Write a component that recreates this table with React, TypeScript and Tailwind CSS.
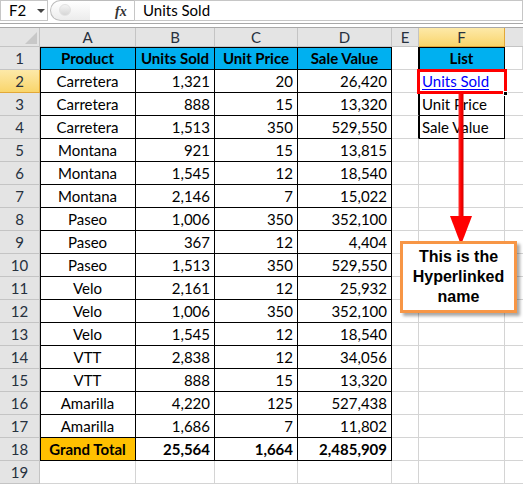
import React from "react";

const rows: [string, string, string, string][] = [
  ["Carretera", "1,321", "20", "26,420"],
  ["Carretera", "888", "15", "13,320"],
  ["Carretera", "1,513", "350", "529,550"],
  ["Montana", "921", "15", "13,815"],
  ["Montana", "1,545", "12", "18,540"],
  ["Montana", "2,146", "7", "15,022"],
  ["Paseo", "1,006", "350", "352,100"],
  ["Paseo", "367", "12", "4,404"],
  ["Paseo", "1,513", "350", "529,550"],
  ["Velo", "2,161", "12", "25,932"],
  ["Velo", "1,006", "350", "352,100"],
  ["Velo", "1,545", "12", "18,540"],
  ["VTT", "2,838", "12", "34,056"],
  ["VTT", "888", "15", "13,320"],
  ["Amarilla", "4,220", "125", "527,438"],
  ["Amarilla", "1,686", "7", "11,802"],
];

const list = ["List", "Units Sold", "Unit Price", "Sale Value"];

const grid = "grid grid-cols-[40px_96px_79px_83px_94px_27px_86px_1fr]";
const cellBase = "h-[23px] border-r border-b leading-[22px] whitespace-nowrap overflow-hidden";
const gray = "border-[#d4d4d4]";
const black = "border-black";

function RowHead({ n, active }: { n: number; active?: boolean }) {
  return (
    <div
      className={
        "h-[23px] border-r border-b text-center leading-[22px] text-[#27313e] " +
        (active
          ? "bg-gradient-to-b from-[#fde9a8] to-[#f9d56a] border-[#e2a838]"
          : "bg-[#e4e4e4] border-[#c4c4c4]")
      }
    >
      {n}
    </div>
  );
}

export default function App() {
  return (
    <div
      className="relative w-[523px] h-[484px] overflow-hidden bg-white text-black text-[15px]"
      style={{ fontFamily: "Lato, 'Open Sans', sans-serif" }}
    >
      {/* formula bar */}
      <div className="flex h-[23px] bg-white">
        <div className="w-[48px] h-[21px] border border-[#c6c6c6] flex items-center pl-[8px] relative">
          <span>F2</span>
          <span className="absolute left-[36px] top-[8px] w-0 h-0 border-l-[4px] border-r-[4px] border-t-[4px] border-l-transparent border-r-transparent border-t-[#444]" />
        </div>
        <div className="w-[86px] h-[21px] relative bg-white">
          <div className="absolute left-[2px] top-0 w-[40px] h-[21px] rounded-l-full border-l border-t border-b border-[#bcbcbc] bg-gradient-to-b from-white to-[#ececec]" />
          <div className="absolute left-[11px] top-[4px] w-[12px] h-[12px] rounded-full bg-gradient-to-b from-[#f4f4f4] to-[#d6d6d6] border border-[#e2e2e2]" />
          <div className="absolute left-[42px] top-0 w-[44px] h-[21px] border-t border-b border-[#bcbcbc]" />
          <span
            className="absolute left-[67px] top-[1px] italic font-bold text-[14px] text-[#333]"
            style={{ fontFamily: "'Liberation Serif', serif" }}
          >
            fx
          </span>
        </div>
        <div className="flex-1 h-[21px] border border-[#c6c6c6] pl-[8px] leading-[19px]">Units Sold</div>
      </div>
      <div className="h-[5px] border-t border-b border-[#a8a8a8] bg-white" />

      {/* column headers */}
      <div className={grid}>
        <div className="h-[19px] bg-[#e4e4e4] border-r border-b border-[#c4c4c4] relative">
          <span className="absolute right-[2px] bottom-[2px] w-0 h-0" style={{ borderBottom: "12px solid #c8c8c8", borderLeft: "12px solid transparent" }} />
        </div>
        {["A", "B", "C", "D", "E"].map((c) => (
          <div key={c} className="h-[19px] bg-[#e4e4e4] border-r border-b border-[#c4c4c4] text-center leading-[19px] text-[#27313e]">
            {c}
          </div>
        ))}
        <div className="h-[19px] bg-gradient-to-b from-[#fde9a8] to-[#f9d56a] border-r border-b border-[#e2a838] text-center leading-[19px] text-[#27313e]">
          F
        </div>
        <div className="h-[19px] bg-[#e4e4e4] border-b border-[#c4c4c4]" />
      </div>

      {/* sheet rows */}
      <div className={grid}>
        {/* row 1 */}
        <RowHead n={1} />
        {["Product", "Units Sold", "Unit Price", "Sale Value"].map((h, i) => (
          <div
            key={h}
            className={`${cellBase} ${black} bg-[#00b0f0] font-bold text-center ${i === 0 ? "shadow-[inset_1px_1px_0_#000]" : "shadow-[inset_0_1px_0_#000]"}`}
          >
            {h}
          </div>
        ))}
        <div className={`${cellBase} ${black} border-b-[#d4d4d4]`} />
        <div className={`${cellBase} ${black} bg-[#00b0f0] font-bold text-center shadow-[inset_1px_1px_0_#000]`}>List</div>
        <div className={`${cellBase} ${gray}`} />

        {rows.map((r, i) => {
          const n = i + 2;
          const fText = list[n - 1];
          return (
            <React.Fragment key={n}>
              <RowHead n={n} active={n === 2} />
              <div className={`${cellBase} ${black} text-center shadow-[inset_1px_0_0_#000]`}>{r[0]}</div>
              <div className={`${cellBase} ${black} text-right pr-[4px]`}>{r[1]}</div>
              <div className={`${cellBase} ${black} text-right pr-[4px]`}>{r[2]}</div>
              <div className={`${cellBase} ${black} text-right pr-[4px]`}>{r[3]}</div>
              <div className={`${cellBase} ${n <= 4 ? black : gray} border-b-[#d4d4d4]`} />
              {fText ? (
                <div className={`${cellBase} ${black} pl-[3px] shadow-[inset_1px_0_0_#000]`}>
                  {n === 2 ? <span className="text-[#0000ff] underline underline-offset-2">{fText}</span> : fText}
                </div>
              ) : (
                <div className={`${cellBase} ${gray}`} />
              )}
              <div className={`${cellBase} ${gray} border-r-0`} />
            </React.Fragment>
          );
        })}

        {/* row 18 */}
        <RowHead n={18} />
        <div className={`${cellBase} ${black} bg-[#ffc000] font-bold text-center shadow-[inset_1px_0_0_#000]`}>Grand Total</div>
        <div className={`${cellBase} ${black} font-bold text-right pr-[4px]`}>25,564</div>
        <div className={`${cellBase} ${black} font-bold text-right pr-[4px]`}>1,664</div>
        <div className={`${cellBase} ${black} font-bold text-right pr-[4px]`}>2,485,909</div>
        <div className={`${cellBase} ${gray}`} />
        <div className={`${cellBase} ${gray}`} />
        <div className={`${cellBase} ${gray} border-r-0`} />

        {/* row 19 */}
        <RowHead n={19} />
        {[0, 1, 2, 3, 4, 5].map((k) => (
          <div key={k} className={`${cellBase} ${gray}`} />
        ))}
        <div className={`${cellBase} ${gray} border-r-0`} />
      </div>

      {/* selection box around F2 */}
      <div className="absolute left-[417px] top-[69px] w-[90px] h-[25px] border-[3px] border-[#ff0000]" />
      <div className="absolute left-[503px] top-[91px] w-[5px] h-[5px] bg-black border border-white" />

      {/* red arrow */}
      <svg className="absolute left-[440px] top-[94px]" width="44" height="154" viewBox="0 0 44 154">
        <defs>
          <linearGradient id="shaft" x1="0" x2="1" y1="0" y2="0">
            <stop offset="0" stopColor="#ff3030" />
            <stop offset="0.5" stopColor="#ff0000" />
            <stop offset="1" stopColor="#d00000" />
          </linearGradient>
        </defs>
        <rect x="18.5" y="0" width="5" height="126" fill="url(#shaft)" />
        <polygon points="10,122 32,122 21,151" fill="#ff0000" />
      </svg>

      {/* callout */}
      <div
        className="absolute left-[400px] top-[241px] w-[117px] h-[72px] bg-white border-[3px] border-[#f79646] shadow-[3px_3px_3px_rgba(0,0,0,0.35)] flex items-center justify-center text-center font-bold text-[16px] leading-[20px]"
        style={{ fontFamily: "'Liberation Sans', Arial, sans-serif" }}
      >
        <div>
          This is the
          <br />
          Hyperlinked
          <br />
          name
        </div>
      </div>
    </div>
  );
}
